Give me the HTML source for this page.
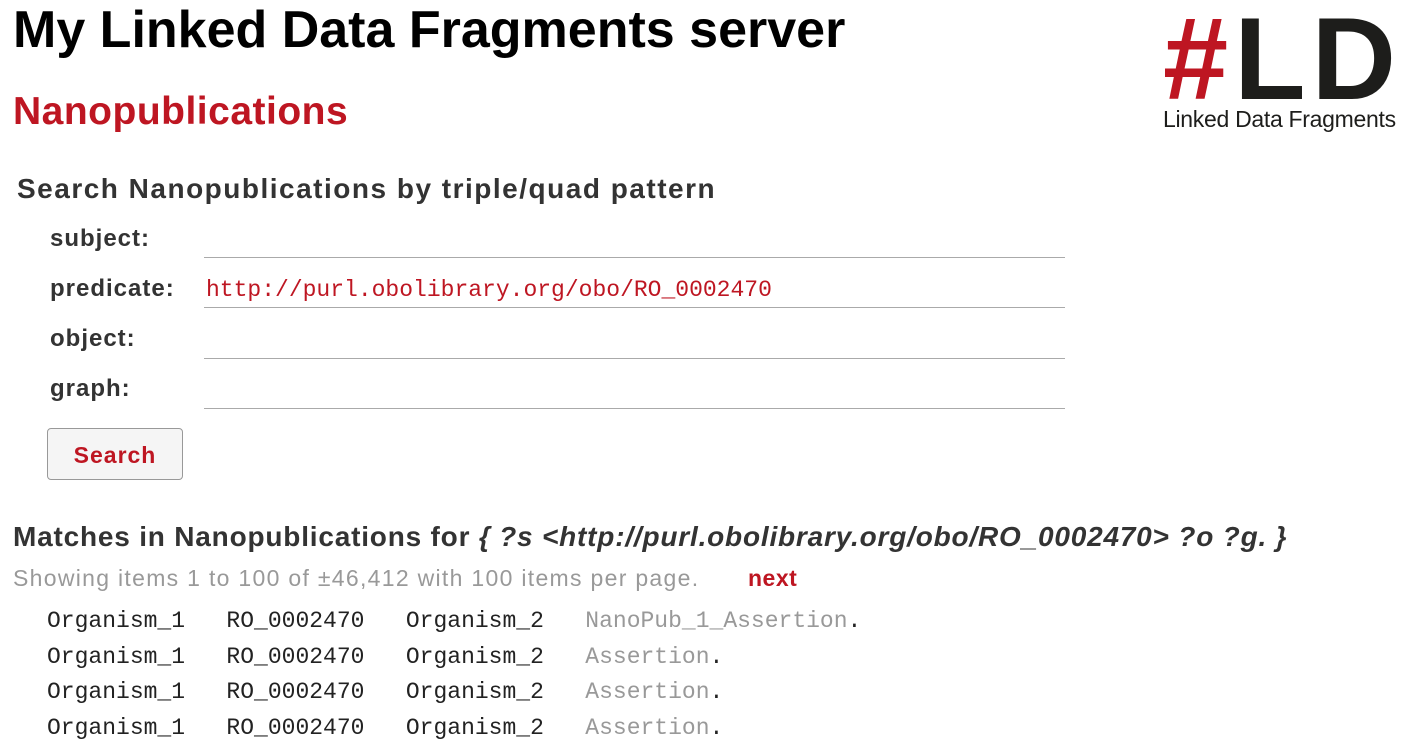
<!DOCTYPE html>
<html><head><meta charset="utf-8"><style>
body{margin:0;background:#fff;font-family:"Liberation Sans","DejaVu Sans",sans-serif;color:#333;width:1405px;height:733px;overflow:hidden;position:relative}
.a{position:absolute;white-space:nowrap}
h1{position:absolute;left:13px;top:0px;margin:0;font-size:52px;font-weight:bold;color:#000}
.red{color:#be1622}
.lbl{position:absolute;left:50px;font-size:24px;font-weight:bold;color:#333;letter-spacing:1px}
.line{position:absolute;left:204px;width:861px;height:1px;background:#aaa}
.mono{font-family:"Liberation Mono","DejaVu Sans Mono",monospace;font-size:23px}
pre{margin:0}
.g{color:#999}
</style></head><body>
<h1>My Linked Data Fragments server</h1>
<div class="a red" style="left:13px;top:90px;font-size:39px;font-weight:bold;letter-spacing:0.5px">Nanopublications</div>
<div class="a" style="left:1163px;top:-4px;font-size:117px;font-weight:bold;letter-spacing:6px;line-height:125px"><span class="red">#</span><span style="color:#1d1d1b">LD</span></div>
<div class="a" style="left:1163px;top:106px;font-size:23px;color:#1d1d1b;letter-spacing:-0.3px">Linked Data Fragments</div>
<div class="a" style="left:17px;top:173px;font-size:28px;font-weight:bold;letter-spacing:1.5px">Search Nanopublications by triple/quad pattern</div>
<div class="lbl" style="top:225px">subject:</div>
<div class="lbl" style="top:275px">predicate:</div>
<div class="lbl" style="top:325px">object:</div>
<div class="lbl" style="top:375px">graph:</div>
<div class="line" style="top:257px"></div>
<div class="line" style="top:307px"></div>
<div class="line" style="top:358px"></div>
<div class="line" style="top:408px"></div>
<div class="a mono red" style="left:206px;top:277px">http://purl.obolibrary.org/obo/RO_0002470</div>
<div class="a" style="left:47px;top:428px;width:134px;height:50px;background:#f5f5f5;border:1px solid #999;border-radius:4px;text-align:center;line-height:52px;font-size:23px;font-weight:bold;color:#be1622;letter-spacing:1px">Search</div>
<div class="a" style="left:13px;top:521px;font-size:28px;font-weight:bold;letter-spacing:0.8px">Matches in Nanopublications for <i>{ ?s &lt;http://purl.obolibrary.org/obo/RO_0002470&gt; ?o ?g. }</i></div>
<div class="a g" style="left:13px;top:565px;font-size:23px;letter-spacing:1.3px">Showing items 1 to 100 of ±46,412 with 100 items per page.</div>
<div class="a red" style="left:748px;top:565px;font-size:23px;font-weight:bold;letter-spacing:0.5px">next</div>
<pre class="a mono" style="left:47px;top:604px;line-height:35.5px;color:#222;white-space:pre">Organism_1   RO_0002470   Organism_2   <span class="g">NanoPub_1_Assertion</span>.
Organism_1   RO_0002470   Organism_2   <span class="g">Assertion</span>.
Organism_1   RO_0002470   Organism_2   <span class="g">Assertion</span>.
Organism_1   RO_0002470   Organism_2   <span class="g">Assertion</span>.</pre>
</body></html>
